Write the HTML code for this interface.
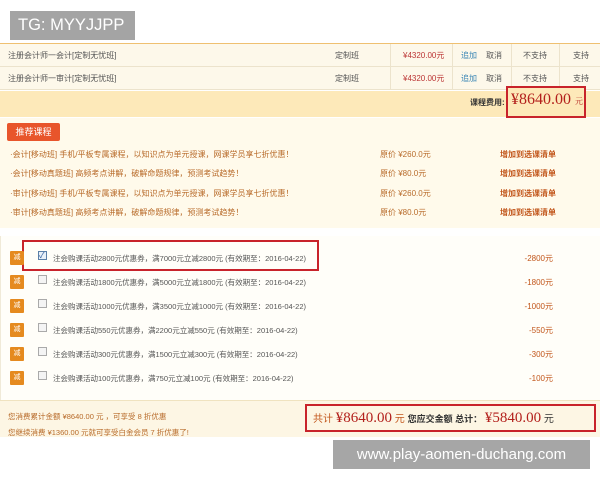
<!DOCTYPE html>
<html><head><meta charset="utf-8"><style>
*{margin:0;padding:0;box-sizing:border-box}
body{width:600px;height:480px;background:#fff;position:relative;overflow:hidden;font-family:"Liberation Sans","Noto Sans CJK SC",sans-serif;font-size:8px;color:#555}
.a{position:absolute;white-space:nowrap}
.tg{left:10px;top:11px;width:125px;height:29px;background:#a4a4a4;color:#fff;font-size:16.5px;line-height:29px;padding-left:8px}
.wm{left:333px;top:440px;width:257px;height:29px;background:#a6a6a6;color:#fff;font-size:15px;line-height:29px;text-align:center}
.row{left:0;width:600px;height:23px;background:#fdf8ea;border-bottom:1px solid #ece3cc;line-height:23px}
.vl{position:absolute;top:44px;height:46px;width:1px;background:#ece3cc}
.red{border:2px solid #c8232b}
.o{color:#b86b2a}
.b{color:#c2561b;font-weight:bold}
.badge{left:10px;width:14px;height:14px;background:#e58a1f;color:#fff;font-size:7px;text-align:center;line-height:14px;border-radius:1px}
.cb{left:38px;width:9px;height:9px;border:1px solid #aaa;background:#f4f4f4}
.cp{left:53px;font-size:7.5px;color:#555}
.amt{right:47px;font-size:8px;color:#c2561b}
</style></head><body>
<div class="a tg">TG: MYYJJPP</div>
<div class="a" style="left:0;top:43px;width:600px;height:1px;background:#efc071"></div>
<div class="a row" style="top:44px"><span class="a" style="left:8px">注册会计师一会计[定制无忧班]</span><span class="a" style="left:335px">定制班</span><span class="a" style="left:403px;color:#b33">¥4320.00元</span><span class="a" style="left:461px;color:#3a86b5">追加</span><span class="a" style="left:486px">取消</span><span class="a" style="left:523px">不支持</span><span class="a" style="left:573px">支持</span></div>
<div class="a row" style="top:67px"><span class="a" style="left:8px">注册会计师一审计[定制无忧班]</span><span class="a" style="left:335px">定制班</span><span class="a" style="left:403px;color:#b33">¥4320.00元</span><span class="a" style="left:461px;color:#3a86b5">追加</span><span class="a" style="left:486px">取消</span><span class="a" style="left:523px">不支持</span><span class="a" style="left:573px">支持</span></div>
<div class="vl a" style="left:390px"></div><div class="vl a" style="left:452px"></div><div class="vl a" style="left:511px"></div><div class="vl a" style="left:559px"></div>
<div class="a" style="left:0;top:91px;width:600px;height:26px;background:#fde9b9"></div>
<div class="a" style="left:470px;top:97px;color:#333;font-weight:bold">课程费用:</div>
<div class="a red" style="left:506px;top:86px;width:80px;height:32px;background:#fde9b9"></div>
<div class="a" style="left:511px;top:91px;font-size:16px;color:#b3201c;font-family:'Liberation Serif','Noto Serif CJK SC',serif">¥8640.00 <span style="font-size:8px">元</span></div>
<div class="a" style="left:0;top:118px;width:600px;height:110px;background:#fffaeb"></div>
<div class="a" style="left:7px;top:123px;width:53px;height:18px;background:#e8552b;color:#fff;font-size:9px;line-height:18px;text-align:center;border-radius:2px">推荐课程</div>
<div class="a o" style="left:10px;top:149px">·会计[移动班] 手机/平板专属课程，以知识点为单元授课，网课学员享七折优惠！</div>
<div class="a o" style="left:10px;top:168px">·会计[移动真题班] 高频考点讲解，破解命题规律，预测考试趋势！</div>
<div class="a o" style="left:10px;top:188px">·审计[移动班] 手机/平板专属课程，以知识点为单元授课，网课学员享七折优惠！</div>
<div class="a o" style="left:10px;top:207px">·审计[移动真题班] 高频考点讲解，破解命题规律，预测考试趋势！</div>
<div class="a o" style="left:380px;top:149px">原价 ¥260.0元</div><div class="a o" style="left:380px;top:168px">原价 ¥80.0元</div><div class="a o" style="left:380px;top:188px">原价 ¥260.0元</div><div class="a o" style="left:380px;top:207px">原价 ¥80.0元</div>
<div class="a b" style="left:500px;top:149px">增加到选课清单</div><div class="a b" style="left:500px;top:168px">增加到选课清单</div><div class="a b" style="left:500px;top:188px">增加到选课清单</div><div class="a b" style="left:500px;top:207px">增加到选课清单</div>
<div class="a" style="left:0;top:236px;width:600px;height:164px;background:#fffef9;border-left:1px solid #f0ead8"></div>
<div class="a red" style="left:22px;top:240px;width:297px;height:31px"></div>
<div class="a badge" style="top:251px">减</div><div class="a cb" style="top:251px;border-color:#5a7fa8;background:#e8f0f8;color:#2a5a9a;font-size:8px;line-height:7px">✓</div><div class="a cp" style="top:253px">注会购课活动2800元优惠券，满7000元立减2800元 (有效期至：2016-04-22)</div><div class="a amt" style="top:253px">-2800元</div>
<div class="a badge" style="top:275px">减</div><div class="a cb" style="top:275px"></div><div class="a cp" style="top:277px">注会购课活动1800元优惠券，满5000元立减1800元 (有效期至：2016-04-22)</div><div class="a amt" style="top:277px">-1800元</div>
<div class="a badge" style="top:299px">减</div><div class="a cb" style="top:299px"></div><div class="a cp" style="top:301px">注会购课活动1000元优惠券，满3500元立减1000元 (有效期至：2016-04-22)</div><div class="a amt" style="top:301px">-1000元</div>
<div class="a badge" style="top:323px">减</div><div class="a cb" style="top:323px"></div><div class="a cp" style="top:325px">注会购课活动550元优惠券，满2200元立减550元 (有效期至：2016-04-22)</div><div class="a amt" style="top:325px">-550元</div>
<div class="a badge" style="top:347px">减</div><div class="a cb" style="top:347px"></div><div class="a cp" style="top:349px">注会购课活动300元优惠券，满1500元立减300元 (有效期至：2016-04-22)</div><div class="a amt" style="top:349px">-300元</div>
<div class="a badge" style="top:371px">减</div><div class="a cb" style="top:371px"></div><div class="a cp" style="top:373px">注会购课活动100元优惠券，满750元立减100元 (有效期至：2016-04-22)</div><div class="a amt" style="top:373px">-100元</div>
<div class="a" style="left:0;top:400px;width:600px;height:37px;background:#fdf6e4;border-top:1px solid #f0e3c0"></div>
<div class="a o" style="left:8px;top:411px;font-size:7.5px">您消费累计金额 ¥8640.00 元 ，可享受 8 折优惠</div>
<div class="a o" style="left:8px;top:427px;font-size:7.5px">您继续消费 ¥1360.00 元就可享受白金会员 7 折优惠了!</div>
<div class="a red" style="left:305px;top:404px;width:291px;height:28px"></div>
<div class="a" style="left:313px;top:410px;font-size:10px;color:#c2561b">共计 <span style="font-size:15px;color:#b3201c;font-family:'Liberation Serif','Noto Serif CJK SC',serif">¥8640.00</span> 元 <b style="color:#333;font-size:9px">您应交金额 总计：</b> <span style="font-size:15px;color:#b3201c;font-family:'Liberation Serif','Noto Serif CJK SC',serif">¥5840.00</span> <span style="color:#333">元</span></div>
<div class="a" style="left:0;top:437px;width:600px;height:43px;background:#fff"></div>
<div class="a wm">www.play-aomen-duchang.com</div>
</body></html>
